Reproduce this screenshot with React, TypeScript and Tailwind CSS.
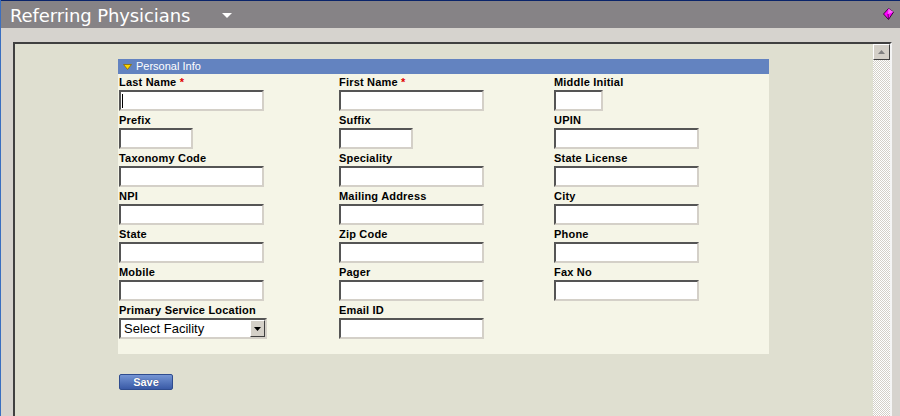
import React from "react";

type Field = {
  label: string;
  required?: boolean;
  width?: string;
  kind?: "input" | "select";
  caret?: boolean;
};

const rows: (Field | null)[][] = [
  [
    { label: "Last Name", required: true, caret: true },
    { label: "First Name", required: true },
    { label: "Middle Initial", width: "w-[49px]" },
  ],
  [
    { label: "Prefix", width: "w-[74px]" },
    { label: "Suffix", width: "w-[74px]" },
    { label: "UPIN" },
  ],
  [{ label: "Taxonomy Code" }, { label: "Speciality" }, { label: "State License" }],
  [{ label: "NPI" }, { label: "Mailing Address" }, { label: "City" }],
  [{ label: "State" }, { label: "Zip Code" }, { label: "Phone" }],
  [{ label: "Mobile" }, { label: "Pager" }, { label: "Fax No" }],
  [{ label: "Primary Service Location", kind: "select" }, { label: "Email ID" }, null],
];

const inset =
  "border-2 border-t-[#555555] border-l-[#555555] border-b-[#d4d0c8] border-r-[#d4d0c8] bg-white";

function FieldCell({ field }: { field: Field | null }) {
  if (!field) return <div />;

  return (
    <div className="flex flex-col items-start mb-[1px]">
      <label className="h-[16px] leading-[16px] text-[11px] font-bold text-black tracking-[0.2px]">
        {field.label}
        {field.required && <span className="text-[#e00000]"> *</span>}
      </label>
      {field.kind === "select" ? (
        <div className={`w-[148px] h-[21px] flex items-center ${inset}`}>
          <span className="flex-1 pl-[3px] text-[13px] leading-[17px] text-black">Select Facility</span>
          <div className="w-[15px] h-[17px] bg-[#d4d0c8] border border-t-white border-l-white border-b-[#404040] border-r-[#404040] flex items-center justify-center">
            <svg width="7" height="4" viewBox="0 0 7 4">
              <polygon points="0,0 7,0 3.5,4" fill="#000" />
            </svg>
          </div>
        </div>
      ) : (
        <div className={`${field.width ?? "w-[145px]"} h-[21px] flex items-center ${inset}`}>
          {field.caret && <div className="ml-[1px] w-[1px] h-[14px] bg-black" />}
        </div>
      )}
    </div>
  );
}

export default function App() {
  return (
    <div className="w-[900px] h-[416px] overflow-hidden bg-[#d6d3ce] border-l border-[#3a6ec0] flex flex-col font-['Liberation_Sans',Arial,sans-serif]">
      <div className="h-[1px] bg-[#0a246a]" />

      {/* Title bar */}
      <div className="h-[27px] bg-[#868386] flex items-center pl-[9px] pr-[6px]">
        <span className="pt-[2px] text-white text-[18px] leading-[21px] font-['DejaVu_Sans',Verdana,sans-serif] tracking-[-0.1px]">
          Referring Physicians
        </span>
        <svg className="ml-[32px] mt-[2px]" width="10" height="5" viewBox="0 0 10 5">
          <polygon points="0,0 10,0 5,5" fill="#fff" />
        </svg>
        <div className="flex-1" />
        <svg className="mb-[2px]" width="11" height="12" viewBox="0 0 11 12">
          <polygon points="5.5,0.5 10.5,4 5.5,11.5 0.5,6" fill="#ff00ff" stroke="#400040" strokeWidth="1" />
          <polygon points="5.5,0.5 10.5,4 5,6" fill="#ff66ff" />
          <line x1="5" y1="6" x2="5.5" y2="11.5" stroke="#600060" strokeWidth="1" />
        </svg>
      </div>

      <div className="h-[14px]" />

      {/* Panel */}
      <div className="flex-1 ml-[12px] mr-[8px] flex border-t-2 border-l-2 border-r-2 border-t-[#404040] border-l-[#404040] border-r-[#f4f4f4] min-h-0">
        <div className="flex-1 bg-[#dfdfd0] pt-[15px] pl-[103px]">
          <div className="w-[651px] bg-[#f5f5e7]">
            <div className="h-[15px] bg-[#6383c0] flex items-center pl-[5px]">
              <svg width="9" height="6" viewBox="0 0 9 6">
                <polygon points="0.5,0.5 8.5,0.5 4.5,5.5" fill="#ffd700" stroke="#8a6a00" strokeWidth="0.8" />
              </svg>
              <span className="ml-[4px] text-[11px] leading-[15px] text-white">Personal Info</span>
            </div>
            <div className="grid grid-cols-[220px_215px_1fr] pl-[1px] pb-[14px]">
              {rows.map((row, i) =>
                row.map((f, j) => <FieldCell key={`${i}-${j}`} field={f} />)
              )}
            </div>
          </div>

          <button
            type="button"
            className="mt-[20px] ml-[1px] w-[54px] h-[16px] rounded-[2px] border border-[#2f4c8f] bg-gradient-to-b from-[#7595d4] to-[#3a5aa6] text-white text-[11px] leading-[14px] font-bold [text-shadow:0_0_1px_#1c2f66]"
          >
            Save
          </button>
        </div>

        {/* Scrollbar */}
        <div className="w-[17px] flex flex-col">
          <div className="h-[16px] bg-[#d4d0c8] border border-t-white border-l-white border-b-[#404040] border-r-[#404040] flex items-center justify-center">
            <svg width="7" height="4" viewBox="0 0 7 4">
              <polygon points="3.5,0 7,4 0,4" fill="#808080" />
            </svg>
          </div>
          <div className="flex-1 bg-[repeating-conic-gradient(#d4d0c8_0_25%,#ffffff_0_50%)] bg-[length:2px_2px]" />
        </div>
      </div>
    </div>
  );
}
